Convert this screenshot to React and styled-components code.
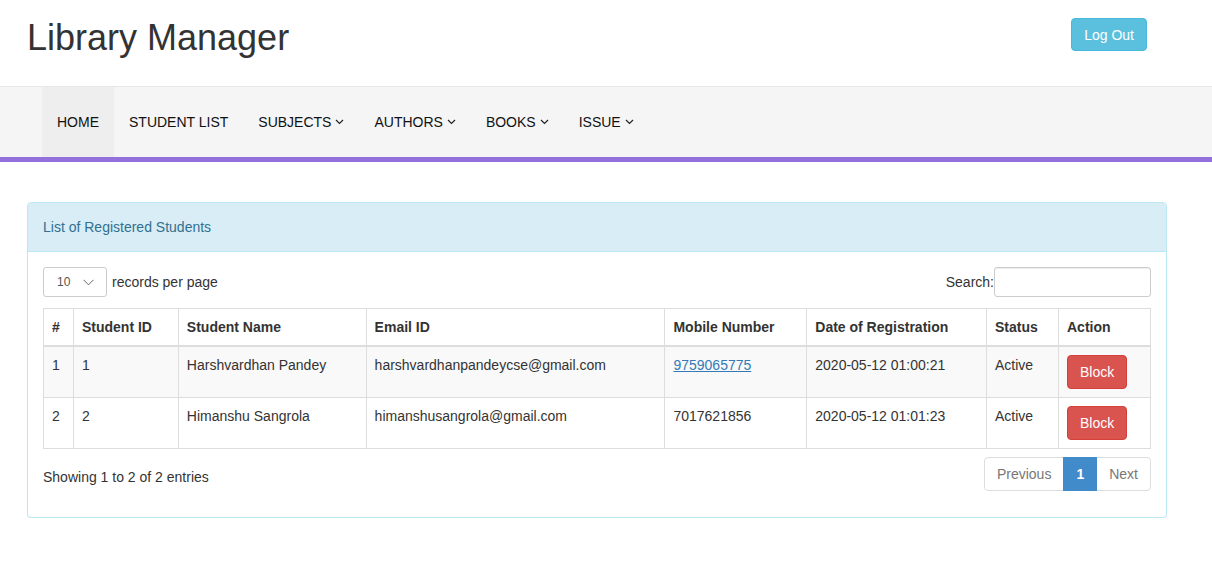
import React from "react";
import styled, { createGlobalStyle } from "styled-components";

const Global = createGlobalStyle`
  html, body { margin: 0; padding: 0; background: #fff; }
  body {
    font-family: "Liberation Sans", Arial, sans-serif;
    font-size: 14px;
    line-height: 20px;
    color: #333;
  }
  * { box-sizing: border-box; }
`;

const Header = styled.header`
  height: 87px;
  display: flex;
  align-items: flex-start;
  justify-content: space-between;
  padding: 0 65px 0 27px;
  border-bottom: 1px solid #e7e7e7;
`;

const Title = styled.h1`
  margin: 18px 0 0;
  font-size: 36px;
  line-height: 40px;
  font-weight: 400;
  color: #333;
`;

const Btn = styled.button`
  font-family: inherit;
  font-size: 14px;
  line-height: 20px;
  padding: 6px 12px;
  border-radius: 4px;
  border: 1px solid ${(p) => p.$border};
  background: ${(p) => p.$bg};
  color: #fff;
  cursor: pointer;
`;

const LogOutBtn = styled(Btn)`
  margin-top: 18px;
  height: 33px;
  padding: 5px 12px;
`;

const NavBar = styled.nav`
  background: #f5f5f5;
  height: 75px;
  border-bottom: 5px solid #9370db;
  padding-left: 42px;
  display: flex;
`;

const NavItem = styled.a`
  display: flex;
  align-items: center;
  gap: 4px;
  height: 70px;
  padding: 0 15px;
  color: #111;
  text-transform: uppercase;
  text-decoration: none;
  background: ${(p) => (p.$active ? "#eeeeee" : "transparent")};
`;

const Caret = () => (
  <svg width="9" height="6" viewBox="0 0 9 6" fill="none">
    <path d="M1 1l3.5 3.5L8 1" stroke="#222" strokeWidth="1.2" />
  </svg>
);

const Main = styled.main`
  padding: 40px 45px 0 27px;
`;

const Panel = styled.section`
  width: 1140px;
  border: 1px solid #bce8f1;
  border-radius: 4px;
  background: #fff;
  box-shadow: 0 1px 1px rgba(0, 0, 0, 0.05);
`;

const PanelHeading = styled.div`
  background: #d9edf7;
  color: #31708f;
  padding: 14px 15px;
  border-bottom: 1px solid #bce8f1;
  border-radius: 3px 3px 0 0;
`;

const PanelBody = styled.div`
  padding: 15px 15px 26px;
`;

const TopBar = styled.div`
  display: flex;
  justify-content: space-between;
  align-items: center;
  margin-bottom: 11px;
`;

const LengthWrap = styled.label`
  display: flex;
  align-items: center;
  gap: 5px;
`;

const FakeSelect = styled.div`
  width: 64px;
  height: 30px;
  border: 1px solid #ccc;
  border-radius: 3px;
  display: flex;
  align-items: center;
  justify-content: space-between;
  padding: 0 12px 0 13px;
  font-size: 12px;
  color: #555;
`;

const SearchWrap = styled.label`
  display: flex;
  align-items: center;
`;

const SearchInput = styled.input`
  width: 157px;
  height: 30px;
  border: 1px solid #ccc;
  border-radius: 3px;
  font-family: inherit;
  font-size: 12px;
  padding: 5px 10px;
  box-shadow: inset 0 1px 1px rgba(0, 0, 0, 0.075);
`;

const Table = styled.table`
  width: 100%;
  border-collapse: collapse;
  border: 1px solid #ddd;
`;

const Th = styled.th`
  text-align: left;
  font-weight: 700;
  padding: 8px;
  border: 1px solid #ddd;
  border-bottom-width: 2px;
  width: ${(p) => p.$w}px;
  vertical-align: bottom;
`;

const Tr = styled.tr`
  background: ${(p) => (p.$striped ? "#f9f9f9" : "#fff")};
`;

const Td = styled.td`
  padding: 8px;
  border: 1px solid #ddd;
  vertical-align: top;
  height: 51px;
`;

const PhoneLink = styled.a`
  color: #337ab7;
  text-decoration: underline;
`;

const Footer = styled.div`
  display: flex;
  justify-content: space-between;
  align-items: flex-start;
  margin-top: 8px;
`;

const Info = styled.span`
  padding-top: 10px;
`;

const Pager = styled.ul`
  display: flex;
  list-style: none;
  margin: 0;
  padding: 0;
`;

const PageLink = styled.li`
  padding: 6px 12px;
  line-height: 20px;
  height: 34px;
  border: 1px solid ${(p) => (p.$active ? "#428bca" : "#ddd")};
  margin-left: -1px;
  color: ${(p) => (p.$active ? "#fff" : "#777")};
  background: ${(p) => (p.$active ? "#428bca" : "#fff")};
  font-weight: ${(p) => (p.$active ? 700 : 400)};
  z-index: ${(p) => (p.$active ? 1 : 0)};
  &:first-child {
    border-radius: 4px 0 0 4px;
    margin-left: 0;
  }
  &:last-child {
    border-radius: 0 4px 4px 0;
  }
`;

const cols = [
  ["#", 30],
  ["Student ID", 105],
  ["Student Name", 188],
  ["Email ID", 299],
  ["Mobile Number", 142],
  ["Date of Registration", 180],
  ["Status", 72],
  ["Action", 92],
];

const rows = [
  ["1", "1", "Harshvardhan Pandey", "harshvardhanpandeycse@gmail.com", "9759065775", "2020-05-12 01:00:21", "Active", true],
  ["2", "2", "Himanshu Sangrola", "himanshusangrola@gmail.com", "7017621856", "2020-05-12 01:01:23", "Active", false],
];

export default function App() {
  return (
    <>
      <Global />
      <Header>
        <Title>Library Manager</Title>
        <LogOutBtn $bg="#5bc0de" $border="#46b8da">Log Out</LogOutBtn>
      </Header>
      <NavBar>
        <NavItem $active>Home</NavItem>
        <NavItem>Student List</NavItem>
        <NavItem>Subjects <Caret /></NavItem>
        <NavItem>Authors <Caret /></NavItem>
        <NavItem>Books <Caret /></NavItem>
        <NavItem>Issue <Caret /></NavItem>
      </NavBar>
      <Main>
        <Panel>
          <PanelHeading>List of Registered Students</PanelHeading>
          <PanelBody>
            <TopBar>
              <LengthWrap>
                <FakeSelect>
                  10
                  <svg width="11" height="7" viewBox="0 0 11 7" fill="none">
                    <path d="M0.5 0.8l5 5 5-5" stroke="#666" strokeWidth="1" />
                  </svg>
                </FakeSelect>
                records per page
              </LengthWrap>
              <SearchWrap>
                Search:
                <SearchInput type="text" />
              </SearchWrap>
            </TopBar>
            <Table>
              <thead>
                <tr>
                  {cols.map(([c, w]) => (
                    <Th key={c} $w={w}>{c}</Th>
                  ))}
                </tr>
              </thead>
              <tbody>
                {rows.map((r, i) => (
                  <Tr key={r[0]} $striped={i % 2 === 0}>
                    <Td>{r[0]}</Td>
                    <Td>{r[1]}</Td>
                    <Td>{r[2]}</Td>
                    <Td>{r[3]}</Td>
                    <Td>{r[7] ? <PhoneLink href="#">{r[4]}</PhoneLink> : r[4]}</Td>
                    <Td>{r[5]}</Td>
                    <Td>{r[6]}</Td>
                    <Td>
                      <Btn $bg="#d9534f" $border="#d43f3a">Block</Btn>
                    </Td>
                  </Tr>
                ))}
              </tbody>
            </Table>
            <Footer>
              <Info>Showing 1 to 2 of 2 entries</Info>
              <Pager>
                <PageLink>Previous</PageLink>
                <PageLink $active>1</PageLink>
                <PageLink>Next</PageLink>
              </Pager>
            </Footer>
          </PanelBody>
        </Panel>
      </Main>
    </>
  );
}
